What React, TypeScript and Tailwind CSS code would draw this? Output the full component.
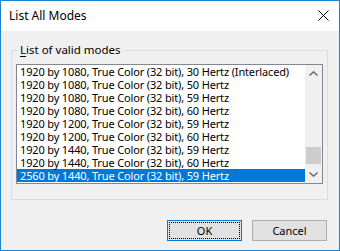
import { useState } from 'react';

const modes = [
  '1920 by 1080, True Color (32 bit), 30 Hertz (Interlaced)',
  '1920 by 1080, True Color (32 bit), 50 Hertz',
  '1920 by 1080, True Color (32 bit), 59 Hertz',
  '1920 by 1080, True Color (32 bit), 60 Hertz',
  '1920 by 1200, True Color (32 bit), 59 Hertz',
  '1920 by 1200, True Color (32 bit), 60 Hertz',
  '1920 by 1440, True Color (32 bit), 59 Hertz',
  '1920 by 1440, True Color (32 bit), 60 Hertz',
  '2560 by 1440, True Color (32 bit), 59 Hertz',
];

export default function App() {
  const [selected, setSelected] = useState(8);

  return (
    <div
      className="w-[340px] h-[251px] flex flex-col border border-[#1883d7] bg-[#f0f0f0] text-[11px] text-black"
      style={{ fontFamily: '"Noto Sans", "DejaVu Sans", sans-serif' }}
    >
      {/* title bar */}
      <div className="h-[30px] bg-white flex items-center justify-between pl-2 pr-[10px]">
        <span className="text-[12px] leading-none">List All Modes</span>
        <svg width="11" height="11" viewBox="0 0 11 11" className="mb-[1px]">
          <path d="M0.5 0.5 L10.5 10.5 M10.5 0.5 L0.5 10.5" stroke="#000" strokeWidth="1" />
        </svg>
      </div>

      <div className="flex-1 flex flex-col pl-[10px] pr-[11px]">
        {/* group box */}
        <div className="relative mt-[19px] border border-[#dcdcdc] pt-[13px] pl-[4px] pr-[4px] pb-[15px]">
          <span className="absolute left-[6px] top-[-9px] bg-[#f0f0f0] px-[2px] leading-[16px] text-[11.5px]">
            <span className="underline underline-offset-2">L</span>ist of valid modes
          </span>

          <div className="flex h-[120px] border border-[#828790] bg-white">
            <ul className="flex-1 overflow-hidden tracking-[-0.15px]">
              {modes.map((m, i) => (
                <li
                  key={i}
                  onClick={() => setSelected(i)}
                  className={
                    'h-[13px] leading-[13px] pl-[3px] whitespace-nowrap ' +
                    (i === selected ? 'bg-[#0078d7] text-white' : '')
                  }
                >
                  {m}
                </li>
              ))}
            </ul>
            {/* scrollbar */}
            <div className="w-[17px] flex flex-col bg-[#f0f0f0]">
              <div className="h-[17px] flex items-center justify-center">
                <svg width="9" height="5" viewBox="0 0 9 5">
                  <path d="M0.5 4.5 L4.5 0.8 L8.5 4.5" fill="none" stroke="#606060" strokeWidth="1.3" />
                </svg>
              </div>
              <div className="flex-1 flex flex-col justify-end pb-[2px]">
                <div className="h-[17px] mx-[1px] bg-[#cdcdcd]" />
              </div>
              <div className="h-[17px] flex items-center justify-center">
                <svg width="9" height="5" viewBox="0 0 9 5">
                  <path d="M0.5 0.5 L4.5 4.2 L8.5 0.5" fill="none" stroke="#606060" strokeWidth="1.3" />
                </svg>
              </div>
            </div>
          </div>
        </div>

        {/* buttons */}
        <div className="flex justify-end gap-[10px] mt-[20px] pr-[1px]">
          <button className="w-[75px] h-[21px] border border-[#0078d7] bg-[#e1e1e1] p-[1px]">
            <span className="flex h-full w-full items-center justify-center border border-dotted border-black leading-none">
              OK
            </span>
          </button>
          <button className="w-[75px] h-[21px] border border-[#adadad] bg-[#e1e1e1] flex items-center justify-center leading-none">
            Cancel
          </button>
        </div>
      </div>
    </div>
  );
}
